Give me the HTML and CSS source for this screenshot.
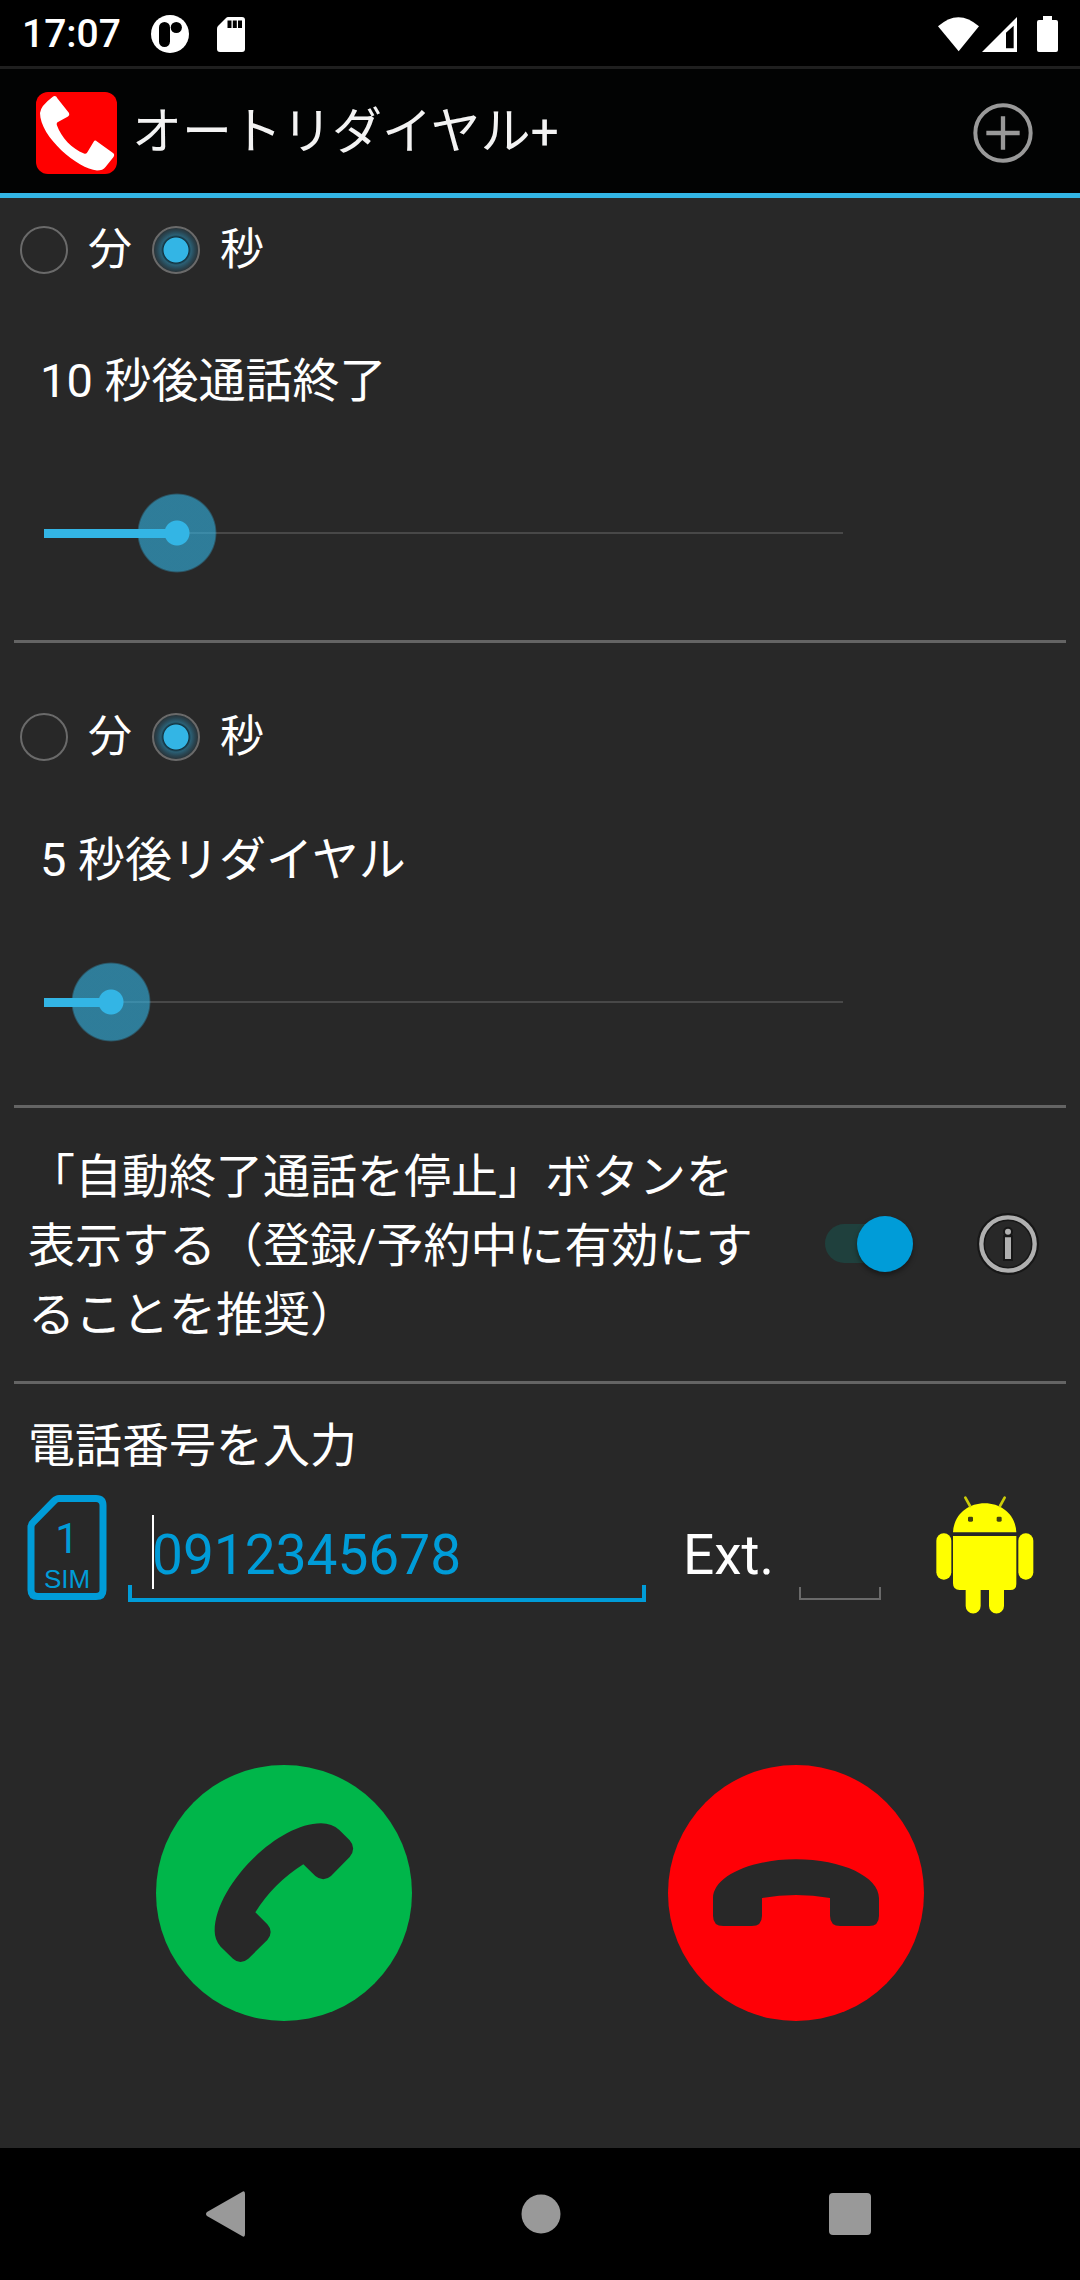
FILE: index.html
```html
<!DOCTYPE html>
<html lang="ja">
<head>
<meta charset="utf-8">
<meta name="viewport" content="width=device-width, initial-scale=1">
<title>オートリダイヤル+</title>
<link rel="stylesheet" href="styles.css">
</head>
<body>
<div class="status-bar">
  <span class="clock">17:07</span>
  <svg class="status-app" viewBox="150 14 38 38" width="38" height="38" aria-hidden="true">
    <circle cx="169" cy="33" r="19" fill="#fff"/>
    <rect x="158" y="21" width="11" height="25" rx="5.5" fill="#000"/>
    <circle cx="175.3" cy="26.5" r="5.6" fill="#000"/>
  </svg>
  <svg class="status-sd" viewBox="216 16 28 35" width="28" height="35" aria-hidden="true">
    <path d="M227 16H241Q244 16 244 19V48Q244 51 241 51H219Q216 51 216 48V28Q216 26 217 25L225 17Q226 16 227 16Z" fill="#fff"/>
    <path d="M226.500 19.500h4v7.500h-4zM231.800 19.500h4v7.500h-4zM237 19.500h4v7.500h-4z" fill="#000"/>
  </svg>
  <div class="status-right">
    <svg viewBox="174 45 123 105" width="41" height="35" aria-hidden="true"><path d="M174 73Q235 18 297 73L236 148Z" fill="#fff"/></svg>
    <svg viewBox="306 45 105 105" width="35" height="35" aria-hidden="true"><path d="M306 150L411 45V150ZM378 92V139H401V71Z" fill="#fff" fill-rule="evenodd"/></svg>
    <svg class="battery" viewBox="471 45 63 108" width="21" height="36" aria-hidden="true"><path d="M489 45H516V57H528Q534 57 534 63V147Q534 153 528 153H477Q471 153 471 147V63Q471 57 477 57H489Z" fill="#fff"/></svg>
  </div>
</div>

<header class="action-bar">
  <svg class="app-icon" viewBox="36 91 81 82" width="81" height="82" aria-hidden="true">
    <rect x="36" y="91" width="81" height="82" rx="12" fill="#f00"/>
    <path d="M52.500 96Q55.500 93.500 57.500 97.500L69 112Q70 114 68 115.500L58 121Q56 122 57 124.500C61 136 72 148 84 152.500Q86.500 153.500 87.500 151L93.500 141Q95 138.500 97 140.500L113 152Q115 153.500 113.500 156L105.500 166Q103 169.500 97 169.500C78 168 40 136 40 112Q40.500 105 52.500 96Z" fill="#fff"/>
  </svg>
  <h1 class="title">オートリダイヤル+</h1>
  <button class="icon-button add" type="button" aria-label="追加">
    <svg viewBox="279 308 180 180" width="60" height="60" aria-hidden="true"><g fill="none" stroke="#999"><circle cx="369" cy="398" r="83" stroke-width="12"/><path d="M319 398H419M369 348V448" stroke-width="13"/></g></svg>
  </button>
</header>

<main class="content">
  <section class="timer">
    <div class="units" role="radiogroup" aria-label="通話終了の単位">
      <label class="unit"><input class="radio" type="radio" name="end-unit">分</label>
      <label class="unit"><input class="radio" type="radio" name="end-unit" checked>秒</label>
    </div>
    <label class="timer-label" for="end-delay">10 秒後通話終了</label>
    <input class="slider" id="end-delay" type="range" min="0" max="60" value="10" style="--value: 10">
  </section>

  <section class="timer timer-redial">
    <div class="units" role="radiogroup" aria-label="リダイヤルの単位">
      <label class="unit"><input class="radio" type="radio" name="redial-unit">分</label>
      <label class="unit"><input class="radio" type="radio" name="redial-unit" checked>秒</label>
    </div>
    <label class="timer-label" for="redial-delay">5 秒後リダイヤル</label>
    <input class="slider" id="redial-delay" type="range" min="0" max="60" value="5" style="--value: 5">
  </section>

  <section class="option">
    <label class="option-label" for="stop-button">「自動終了通話を停止」ボタンを表示する（登録/予約中に有効にすることを推奨）</label>
    <input class="switch" id="stop-button" type="checkbox" role="switch" checked>
    <button class="icon-button info" type="button" aria-label="情報">
      <svg viewBox="591 159 186 186" width="62" height="62" aria-hidden="true">
        <g fill="none" stroke="#171717"><circle cx="684" cy="252" r="81" stroke-width="24"/></g>
        <path d="M675 232H693V297H675ZM684 206a9 9 0 1 1 0 18a9 9 0 1 1 0-18Z" fill="#b0b0b0" stroke="#171717" stroke-width="12" paint-order="stroke"/>
        <circle cx="684" cy="252" r="80" fill="none" stroke="#b0b0b0" stroke-width="13"/>
      </svg>
    </button>
  </section>

  <section class="dial">
    <label class="dial-label" for="phone">電話番号を入力</label>
    <div class="dial-row">
      <button class="icon-button sim" type="button" aria-label="SIM 1">
        <svg viewBox="0 0 80 106" width="80" height="106" aria-hidden="true">
          <path d="M32 3.500H69Q76 3.500 76 10.500V95Q76 101.500 69 101.500H11Q4 101.500 4 95V32Q4 29 6.500 27L27 6Q29.500 3.500 32 3.500Z" fill="none" stroke="#009cd8" stroke-width="7"/>
          <text class="sim-number" x="40" y="58">1</text>
          <text class="sim-name" x="40" y="93">SIM</text>
        </svg>
      </button>
      <div class="field field-phone"><input class="input" id="phone" type="tel" placeholder="0912345678"></div>
      <label class="ext-label" for="ext">Ext.</label>
      <div class="field field-ext"><input class="input" id="ext" type="tel"></div>
      <button class="icon-button android" type="button" aria-label="連絡先">
        <svg viewBox="1008 105 294 357" width="98" height="119" aria-hidden="true">
          <g fill="#ff0">
            <path d="M1059 217C1061 165 1103 130 1154 130C1205 130 1247 165 1249 217Z"/>
            <path d="M1059 228H1249V372Q1249 390 1231 390H1212V438A22 22 0 0 1 1167 438V390H1142V438A22 22 0 0 1 1097 438V390H1079Q1059 390 1059 370Z"/>
            <rect x="1009" y="220" width="45" height="139" rx="22"/>
            <rect x="1255" y="220" width="45" height="139" rx="22"/>
          </g>
          <path d="M1096 113L1110 138M1214 113L1200 138" stroke="#cccc08" stroke-width="8" stroke-linecap="round"/>
          <rect x="1104" y="170" width="15" height="15" rx="4" fill="#44440f"/>
          <rect x="1190" y="170" width="15" height="15" rx="4" fill="#44440f"/>
        </svg>
      </button>
    </div>
  </section>

  <div class="calls">
    <button class="icon-button" type="button" aria-label="発信">
      <svg viewBox="78 75 768 768" width="256" height="256" aria-hidden="true">
        <circle cx="462" cy="459" r="384" fill="#00b64a"/>
        <path d="M254 573C254 440 440 250 573 250Q606 250 628 270L659 301Q680 325 659 351L603 408Q580 428 556 408L520 373Q430 430 376 517L412 553Q432 575 412 600L355 656Q331 676 309 656L272 620Q254 600 254 573Z" fill="#282828"/>
      </svg>
    </button>
    <button class="icon-button" type="button" aria-label="終了">
      <svg viewBox="54 75 768 768" width="256" height="256" aria-hidden="true">
        <circle cx="438" cy="459" r="384" fill="#ff0006"/>
        <path d="M189 475C189 410 300 358 438 358C576 358 687 410 687 475V527Q687 558 657 558H571Q540 558 540 527V474Q438 456 336 474V527Q336 558 305 558H220Q189 558 189 527Z" fill="#282828"/>
      </svg>
    </button>
  </div>
</main>

<nav class="nav-bar" aria-label="システム">
  <button class="icon-button" type="button" aria-label="戻る">
    <svg viewBox="0 0 46 46" width="46" height="46" aria-hidden="true"><path d="M36 1Q39 -1 39 3V43Q39 47 36 45L1 25Q-1 23 1 21Z" fill="#999"/></svg>
  </button>
  <button class="icon-button" type="button" aria-label="ホーム">
    <svg viewBox="0 0 40 40" width="40" height="40" aria-hidden="true"><circle cx="20" cy="20" r="19.500" fill="#999"/></svg>
  </button>
  <button class="icon-button" type="button" aria-label="履歴">
    <svg viewBox="0 0 42 42" width="42" height="42" aria-hidden="true"><rect width="42" height="42" rx="4" fill="#999"/></svg>
  </button>
</nav>
</body>
</html>
```

FILE: styles.css
```css
:root {
  --bg: #282828;
  --holo: #33b5e5;
  --accent: #009cd8;
  --line: #646464;
}

* {
  box-sizing: border-box;
}

body {
  display: flex;
  flex-direction: column;
  min-height: 100vh;
  margin: 0;
  background: var(--bg);
  color: #fff;
  font-family: Roboto, "Noto Sans CJK JP", sans-serif;
  font-size: 47px;
  line-height: 69px;
}

svg {
  display: block;
}

.icon-button {
  flex: none;
  padding: 0;
  border: 0;
  background: none;
  cursor: pointer;
}

/* Status bar */
.status-bar {
  display: flex;
  align-items: center;
  height: 69px;
  padding: 2px 22px 0;
  border-bottom: 3px solid #1f1f1f;
  background: #000;
}

.clock {
  font-size: 39px;
  font-weight: 500;
}

.status-app {
  margin-left: 30px;
}

.status-sd {
  margin-left: 28px;
}

.status-right {
  display: flex;
  align-items: center;
  gap: 3px;
  margin-left: auto;
}

.battery {
  margin-left: 17px;
}

/* Title bar */
.action-bar {
  display: flex;
  align-items: center;
  height: 129px;
  padding: 3px 47px 0 36px;
  border-bottom: 5px solid var(--holo);
  background: #020303;
}

.title {
  flex: 1;
  margin: 0 0 0 15px;
  color: #f3f3f3;
  font-size: 50px;
  font-weight: 400;
}

/* Page body */
.content {
  display: flex;
  flex: 1;
  flex-direction: column;
}

.timer,
.option {
  margin: 0 14px;
  border-bottom: 3px solid var(--line);
}

.timer {
  display: flex;
  flex-direction: column;
  padding-bottom: 67px;
}

.timer-redial {
  padding: 42px 0 63px;
}

.units {
  display: flex;
  align-items: center;
  gap: 20px;
  height: 104px;
  padding-left: 6px;
  font-size: 44px;
}

.unit {
  display: flex;
  align-items: center;
  gap: 20px;
}

.radio {
  width: 48px;
  height: 48px;
  margin: 0;
  border: 2px solid #6a6a6a;
  border-radius: 50%;
  appearance: none;
}

.radio:checked {
  background: radial-gradient(circle, var(--holo) 12px, #12303c 13px, #2b6075 15px, #294450 19px, #292f32 23px);
}

.timer-label {
  margin: 44px 0 78px 26px;
}

.timer-redial .timer-label {
  margin: 36px 0 68px 26px;
}

.slider {
  width: calc(100% - 173px);
  height: 80px;
  margin: 0 0 0 -10px;
  background: none;
  appearance: none;
}

.slider::-webkit-slider-runnable-track {
  height: 80px;
  background:
    linear-gradient(var(--holo), var(--holo)) 40px center / calc((100% - 80px) * var(--value) / 60) 9px no-repeat,
    linear-gradient(#484848, #484848) 40px center / calc(100% - 80px) 2px no-repeat;
}

.slider::-webkit-slider-thumb {
  width: 80px;
  height: 80px;
  border-radius: 50%;
  background: radial-gradient(circle, var(--holo) 12px, rgb(51 181 229 / 60%) 13px, rgb(51 181 229 / 60%) 38px, transparent 40px);
  appearance: none;
}

/* Switch row */
.option {
  display: flex;
  align-items: center;
  padding: 34px 27px 32px 14px;
}

.option-label {
  flex: 1;
  max-width: 730px;
}

.switch {
  position: relative;
  width: 88px;
  height: 56px;
  margin: 0 0 3px auto;
  appearance: none;
}

.switch::before {
  content: "";
  position: absolute;
  inset: 8px 10px 9px 0;
  border-radius: 20px;
  background: #1f403d;
}

.switch::after {
  content: "";
  position: absolute;
  top: 0;
  right: 0;
  width: 56px;
  height: 56px;
  border-radius: 50%;
  background: var(--accent);
  box-shadow: 0 3px 5px rgb(0 0 0 / 40%);
}

.info {
  margin: 0 0 3px 64px;
}

/* Phone number */
.dial {
  padding: 27px 46px 0 27px;
}

.dial-label {
  display: block;
  margin: 0 0 15px 1px;
}

.dial-row {
  display: flex;
  align-items: flex-start;
  font-size: 55px;
}

.sim-number,
.sim-name {
  fill: var(--accent);
  text-anchor: middle;
}

.sim-number {
  font-family: Roboto, sans-serif;
  font-size: 42px;
}

.sim-name {
  font-family: "Liberation Sans", sans-serif;
  font-size: 26px;
}

.field {
  position: relative;
  height: 107px;
}

/* Bracket under the field: a baseline with a short tick at each end */
.field::after {
  content: "";
  position: absolute;
  right: 0;
  bottom: 0;
  left: 0;
  height: 13px;
  border: 4px solid var(--accent);
  border-top: 0;
  pointer-events: none;
}

.field-phone {
  flex: 1;
  margin-left: 21px;
}

/* Text cursor */
.field-phone::before {
  content: "";
  position: absolute;
  top: 20px;
  left: 24px;
  width: 2px;
  height: 74px;
  background: #fff;
}

.field-ext {
  width: 82px;
  height: 105px;
  margin: 0 55px 0 25px;
}

.field-ext::after {
  height: 11px;
  border-width: 0 2px 2px;
  border-color: #6a6a6a;
}

.input {
  width: 100%;
  height: 100%;
  padding: 13px 24px 0;
  border: 0;
  outline: 0;
  background: none;
  color: inherit;
  font: inherit;
}

.input::placeholder {
  color: var(--accent);
  opacity: 1;
}

.ext-label {
  margin: 26px 0 0 37px;
}

/* Call and hang-up buttons */
.calls {
  display: grid;
  grid-template-columns: 1fr 1fr;
  justify-items: center;
  padding: 151px 28px 80px;
}

/* System navigation */
.nav-bar {
  display: flex;
  align-items: center;
  justify-content: space-between;
  height: 132px;
  padding: 0 209px 0 206px;
  background: #000;
}
```
